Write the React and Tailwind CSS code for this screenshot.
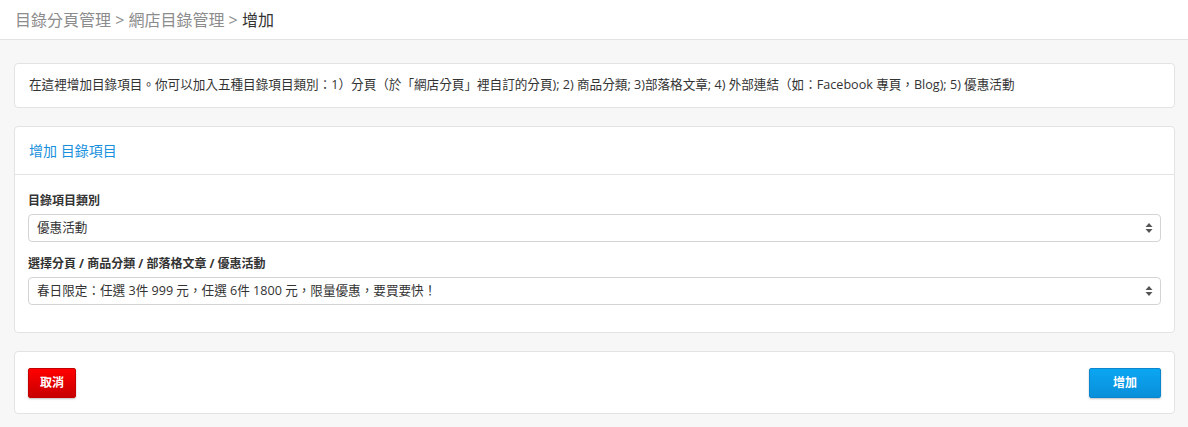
import React from "react";

const font = { fontFamily: '"Open Sans", "Noto Sans CJK TC", sans-serif' };

function Arrows() {
  return (
    <svg width="8" height="12" viewBox="0 0 8 12" className="shrink-0">
      <path d="M4 1 L7.5 5 L0.5 5 Z" fill="#555" />
      <path d="M4 11 L7.5 7 L0.5 7 Z" fill="#555" />
    </svg>
  );
}

function Select({ value }) {
  return (
    <div className="flex h-[28px] items-center justify-between rounded-[4px] border border-[#d4d4d4] bg-white pl-[8px] pr-[7px] text-[12.6px] text-[#333]">
      <span>{value}</span>
      <Arrows />
    </div>
  );
}

export default function App() {
  return (
    <div className="min-h-[427px] bg-[#f7f7f7] text-[#333]" style={font}>
      <div className="flex h-[40px] items-center border-b border-[#e3e3e3] bg-white pl-[15px] text-[16px] text-[#8c8c8c]">
        <span className="whitespace-pre">目錄分頁管理 &gt; 網店目錄管理 &gt; <span className="text-[#333]">增加</span></span>
      </div>

      <div className="ml-[14px] mr-[13px] pt-[23px]">
        <div className="flex h-[45px] items-center rounded-[4px] border border-[#e3e3e3] bg-white px-[14px] text-[12.6px] text-[#333]">
          在這裡增加目錄項目。你可以加入五種目錄項目類別：1）分頁（於「網店分頁」裡自訂的分頁); 2) 商品分類; 3)部落格文章; 4) 外部連結（如：Facebook 專頁，Blog); 5) 優惠活動
        </div>

        <div className="mt-[18px] rounded-[4px] border border-[#e3e3e3] bg-white">
          <div className="flex h-[48px] items-center border-b border-[#e3e3e3] px-[14px] text-[14px] text-[#1790dd]">
            增加 目錄項目
          </div>
          <div className="px-[13px] pb-[27px] pt-[18px]">
            <div className="mb-[5px] text-[12px] leading-[16px] font-bold text-[#333]">目錄項目類別</div>
            <Select value="優惠活動" />
            <div className="mb-[5px] mt-[14px] text-[12px] leading-[16px] font-bold text-[#333]">選擇分頁 / 商品分類 / 部落格文章 / 優惠活動</div>
            <Select value="春日限定：任選 3件 999 元，任選 6件 1800 元，限量優惠，要買要快！" />
          </div>
        </div>

        <div className="mt-[18px] flex h-[63px] items-center justify-between rounded-[4px] border border-[#e3e3e3] bg-white px-[13px]">
          <button className="h-[30px] w-[48px] rounded-[2px] border border-[#c40000] bg-gradient-to-b from-[#ff0000] to-[#c80000] text-[12px] font-bold text-white shadow-[0_1px_2px_rgba(0,0,0,0.25)]">
            取消
          </button>
          <button className="h-[30px] w-[72px] rounded-[2px] border border-[#0a86cf] bg-gradient-to-b from-[#0ba6f2] to-[#0a8fda] text-[12px] font-bold text-white shadow-[0_1px_2px_rgba(0,0,0,0.25)]">
            增加
          </button>
        </div>
      </div>
    </div>
  );
}
